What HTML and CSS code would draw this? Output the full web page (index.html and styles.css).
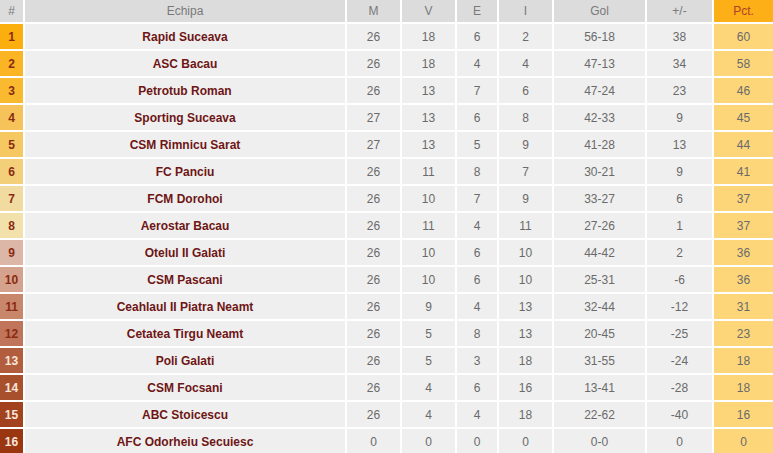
FILE: index.html
```html
<!DOCTYPE html>
<html>
<head>
<meta charset="utf-8">
<link rel="stylesheet" href="styles.css">
</head>
<body>
<div class="standings">
  <div class="row head">
    <div class="c pos">#</div><div class="c">Echipa</div><div class="c">M</div><div class="c">V</div><div class="c">E</div><div class="c">I</div><div class="c">Gol</div><div class="c">+/-</div><div class="c pct">Pct.</div>
  </div>
  <div class="row"><div class="c pos p1">1</div><div class="c team">Rapid Suceava</div><div class="c">26</div><div class="c">18</div><div class="c">6</div><div class="c">2</div><div class="c">56-18</div><div class="c">38</div><div class="c pct">60</div></div>
  <div class="row"><div class="c pos p2">2</div><div class="c team">ASC Bacau</div><div class="c">26</div><div class="c">18</div><div class="c">4</div><div class="c">4</div><div class="c">47-13</div><div class="c">34</div><div class="c pct">58</div></div>
  <div class="row"><div class="c pos p3">3</div><div class="c team">Petrotub Roman</div><div class="c">26</div><div class="c">13</div><div class="c">7</div><div class="c">6</div><div class="c">47-24</div><div class="c">23</div><div class="c pct">46</div></div>
  <div class="row"><div class="c pos p4">4</div><div class="c team">Sporting Suceava</div><div class="c">27</div><div class="c">13</div><div class="c">6</div><div class="c">8</div><div class="c">42-33</div><div class="c">9</div><div class="c pct">45</div></div>
  <div class="row"><div class="c pos p5">5</div><div class="c team">CSM Rimnicu Sarat</div><div class="c">27</div><div class="c">13</div><div class="c">5</div><div class="c">9</div><div class="c">41-28</div><div class="c">13</div><div class="c pct">44</div></div>
  <div class="row"><div class="c pos p6">6</div><div class="c team">FC Panciu</div><div class="c">26</div><div class="c">11</div><div class="c">8</div><div class="c">7</div><div class="c">30-21</div><div class="c">9</div><div class="c pct">41</div></div>
  <div class="row"><div class="c pos p7">7</div><div class="c team">FCM Dorohoi</div><div class="c">26</div><div class="c">10</div><div class="c">7</div><div class="c">9</div><div class="c">33-27</div><div class="c">6</div><div class="c pct">37</div></div>
  <div class="row"><div class="c pos p8">8</div><div class="c team">Aerostar Bacau</div><div class="c">26</div><div class="c">11</div><div class="c">4</div><div class="c">11</div><div class="c">27-26</div><div class="c">1</div><div class="c pct">37</div></div>
  <div class="row"><div class="c pos p9">9</div><div class="c team">Otelul II Galati</div><div class="c">26</div><div class="c">10</div><div class="c">6</div><div class="c">10</div><div class="c">44-42</div><div class="c">2</div><div class="c pct">36</div></div>
  <div class="row"><div class="c pos p10">10</div><div class="c team">CSM Pascani</div><div class="c">26</div><div class="c">10</div><div class="c">6</div><div class="c">10</div><div class="c">25-31</div><div class="c">-6</div><div class="c pct">36</div></div>
  <div class="row"><div class="c pos p11">11</div><div class="c team">Ceahlaul II Piatra Neamt</div><div class="c">26</div><div class="c">9</div><div class="c">4</div><div class="c">13</div><div class="c">32-44</div><div class="c">-12</div><div class="c pct">31</div></div>
  <div class="row"><div class="c pos p12">12</div><div class="c team">Cetatea Tirgu Neamt</div><div class="c">26</div><div class="c">5</div><div class="c">8</div><div class="c">13</div><div class="c">20-45</div><div class="c">-25</div><div class="c pct">23</div></div>
  <div class="row"><div class="c pos p13">13</div><div class="c team">Poli Galati</div><div class="c">26</div><div class="c">5</div><div class="c">3</div><div class="c">18</div><div class="c">31-55</div><div class="c">-24</div><div class="c pct">18</div></div>
  <div class="row"><div class="c pos p14">14</div><div class="c team">CSM Focsani</div><div class="c">26</div><div class="c">4</div><div class="c">6</div><div class="c">16</div><div class="c">13-41</div><div class="c">-28</div><div class="c pct">18</div></div>
  <div class="row"><div class="c pos p15">15</div><div class="c team">ABC Stoicescu</div><div class="c">26</div><div class="c">4</div><div class="c">4</div><div class="c">18</div><div class="c">22-62</div><div class="c">-40</div><div class="c pct">16</div></div>
  <div class="row"><div class="c pos p16">16</div><div class="c team">AFC Odorheiu Secuiesc</div><div class="c">0</div><div class="c">0</div><div class="c">0</div><div class="c">0</div><div class="c">0-0</div><div class="c">0</div><div class="c pct">0</div></div>
</div>
</body>
</html>
```
FILE: styles.css
```css
html, body {
  margin: 0;
  padding: 0;
  background: #ffffff;
  overflow: hidden;
}
body {
  font-family: "Liberation Sans", Arial, sans-serif;
  font-size: 12px;
}
.standings {
  display: grid;
  row-gap: 2px;
  width: 773px;
}
.row {
  display: grid;
  grid-template-columns: 23px 320px 53px 53px 40px 53px 91px 65px 59px;
  column-gap: 2px;
  height: 25px;
}
.row.head {
  height: 22px;
}
.c {
  display: flex;
  align-items: center;
  justify-content: center;
  background: #efefef;
  color: #6a6a6a;
}
.head .c {
  background: #dcdcdc;
  color: #7a7a7a;
}
.head .c.pct {
  background: #fcaf17;
  color: #b0402a;
}
.c.pct {
  background: #fdd67a;
  color: #6a6a6a;
}
.team {
  font-weight: bold;
  color: #6e1515;
}
.pos {
  font-weight: bold;
  color: #8b2a12;
}
.head .pos { font-weight: normal; color: #7a7a7a; }
.p1 { background: #fbaf0e; }
.p2 { background: #fbb524; }
.p3 { background: #f9ba30; }
.p4 { background: #f6c35a; }
.p5 { background: #f5c862; }
.p6 { background: #f3cf7a; }
.p7 { background: #f2dba0; }
.p8 { background: #f2e1aa; }
.p9 { background: #dcb6a6; }
.p10 { background: #d5a28e; }
.p11 { background: #c8866a; }
.p12 { background: #c0745a; }
.p13 { background: #b25e3e; color: #fbe6dc; }
.p14 { background: #a8502c; color: #fbe6dc; }
.p15 { background: #a2421e; color: #fbe6dc; }
.p16 { background: #9a3610; color: #fbe6dc; }
```
